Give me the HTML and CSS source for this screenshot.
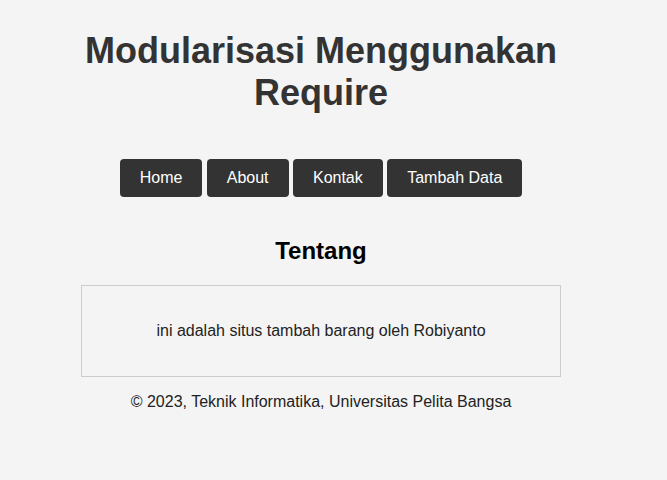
FILE: index.html
```html
<!DOCTYPE html>
<html lang="id">
<head>
<meta charset="utf-8">
<title>Modularisasi Menggunakan Require</title>
<link rel="stylesheet" href="styles.css">
</head>
<body>
<div class="page">
  <header class="header">
    <h1 class="title">Modularisasi Menggunakan Require</h1>
    <nav class="nav">
      <a class="nav-btn" href="#">Home</a>
      <a class="nav-btn" href="#">About</a>
      <a class="nav-btn" href="#">Kontak</a>
      <a class="nav-btn" href="#">Tambah Data</a>
    </nav>
  </header>
  <main class="content">
    <h2 class="section-title">Tentang</h2>
    <div class="box">
      <p class="box-text">ini adalah situs tambah barang oleh Robiyanto</p>
    </div>
  </main>
  <footer class="footer">
    <p class="footer-text">&copy; 2023, Teknik Informatika, Universitas Pelita Bangsa</p>
  </footer>
</div>
</body>
</html>
```
FILE: styles.css
```css
html, body {
  margin: 0;
  padding: 0;
  background: #f4f4f4;
}
body {
  font-family: "Liberation Sans", Arial, sans-serif;
  font-size: 16px;
  color: #222;
}
.page {
  width: 480px;
  margin-left: 81px;
  padding-top: 30px;
}
.title {
  margin: 0;
  font-size: 36px;
  font-weight: bold;
  text-align: center;
  color: #333;
  line-height: 42px;
}
.nav {
  display: flex;
  justify-content: center;
  gap: 4.4px;
  margin-top: 45px;
}
.nav-btn {
  display: block;
  background: #333;
  color: #fff;
  padding: 10px 20px;
  border-radius: 4px;
  line-height: 18px;
  font-size: 16px;
  text-decoration: none;
}
.section-title {
  margin: 40px 0 0;
  font-size: 24px;
  font-weight: bold;
  text-align: center;
  color: #000;
}
.box {
  margin-top: 20px;
  border: 1px solid #ccc;
  padding: 20px;
  text-align: center;
}
.box-text {
  margin: 16px 0;
}
.footer-text {
  margin: 16px 0;
  text-align: center;
}
```
